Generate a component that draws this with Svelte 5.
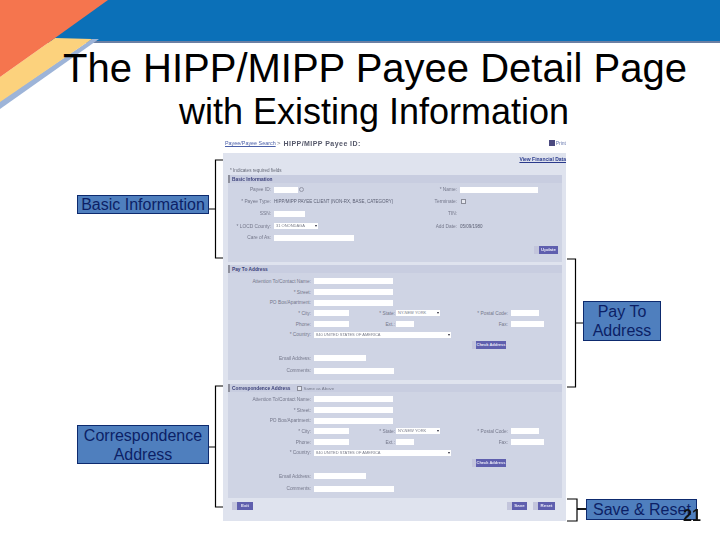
<script>
  const basicRows = [
    { label: "Payee ID:", right: "* Name:" },
    { label: "* Payee Type:", right: "Terminate:" },
    { label: "SSN:", right: "TIN:" },
    { label: "* LOCD County:", right: "Add Date:" },
    { label: "Care of As:", right: "" }
  ];
</script>

{#snippet address(title, same)}
  <section class="block">
    <h3>
      {title}
      {#if same}<span class="same"><i class="check"></i>Same as Above</span>{/if}
    </h3>
    <div class="addr-grid" class:shift={!same}>
      <span class="lab">Attention To/Contact Name:</span>
      <span class="input w79 span5"></span>

      <span class="lab">* Street:</span>
      <span class="input w79 span5"></span>

      <span class="lab">PO Box/Apartment:</span>
      <span class="input w79 span5"></span>

      <span class="lab">* City:</span>
      <span class="input w35"></span>
      <span class="lab mid">* State:</span>
      <span class="select w44"><b>NY-NEW YORK</b></span>
      <span class="lab end">* Postal Code:</span>
      <span class="input w28"></span>

      <span class="lab">Phone:</span>
      <span class="input w35"></span>
      <span class="lab mid">Ext.:</span>
      <span class="input w18"></span>
      <span class="lab end">Fax:</span>
      <span class="input w33"></span>

      <span class="lab">* Country:</span>
      <span class="select w137 span5"><b>840 UNITED STATES OF AMERICA</b></span>

      <span class="check-addr"><button class="btn w34">Check Address</button></span>

      <span class="lab">Email Address:</span>
      <span class="input w52 span5"></span>

      <span class="lab">Comments:</span>
      <span class="input w80 span5"></span>
    </div>
  </section>
{/snippet}

<div class="slide">
  <svg class="decor" width="720" height="110" viewBox="0 0 720 110">
    <rect width="720" height="41" fill="#0b70b8" />
    <rect y="41" width="720" height="2" fill="#6b7fa3" />
    <polygon points="99,39 92,39 0,101 0,109" fill="#9db4d8" />
    <polygon points="92,39 55,38 0,77 0,102" fill="#fcd27d" />
    <polygon points="0,0 108,0 55,38 0,77" fill="#f5754e" />
  </svg>

  <header class="titles">
    <h1>The HIPP/MIPP Payee Detail Page</h1>
    <h2>with Existing Information</h2>
  </header>

  <div class="shot">
    <div class="crumbs">
      <a href="#top">Payee/Payee Search</a>
      <span class="gt">&gt;</span>
      <strong>HIPP/MIPP Payee ID:</strong>
      <span class="print"><i></i>Print</span>
    </div>

    <div class="panel">
      <div class="fin"><a href="#top">View Financial Data</a></div>
      <div class="req">* Indicates required fields</div>

      <section class="block first">
        <h3>Basic Information</h3>
        <div class="basic-grid">
          <span class="lab">{basicRows[0].label}</span>
          <span class="cell"><span class="input w24"></span><i class="search"></i></span>
          <span class="lab">{basicRows[0].right}</span>
          <span class="input w78"></span>

          <span class="lab">{basicRows[1].label}</span>
          <span class="val">HIPP/MIPP PAYEE CLIENT (NON-RX, BASE, CATEGORY)</span>
          <span class="lab">{basicRows[1].right}</span>
          <span class="cell"><i class="check"></i></span>

          <span class="lab">{basicRows[2].label}</span>
          <span class="input w31"></span>
          <span class="lab">{basicRows[2].right}</span>
          <span></span>

          <span class="lab">{basicRows[3].label}</span>
          <span class="select w44"><b>31 ONONDAGA</b></span>
          <span class="lab">{basicRows[3].right}</span>
          <span class="val">05/09/1980</span>

          <span class="lab">{basicRows[4].label}</span>
          <span class="input w80"></span>
          <span></span>
          <span></span>
        </div>
        <div class="update-row"><button class="btn w24b">Update</button></div>
      </section>

      {@render address("Pay To Address", false)}
      {@render address("Correspondence Address", true)}

      <div class="footer">
        <button class="btn w21">Exit</button>
        <span class="grow"></span>
        <button class="btn w20">Save</button>
        <button class="btn w22">Reset</button>
      </div>
    </div>
  </div>

  <svg class="brackets" width="720" height="540" viewBox="0 0 720 540" fill="none" stroke="#000" stroke-width="1.2">
    <path d="M223 160H215.5V258H223M215.5 209H209" />
    <path d="M567 259H575.5V387H567M575.5 323H583" />
    <path d="M223 386H215.5V507H223M215.5 447H209" />
    <path d="M567 499H577V521H567" />
    <path d="M577 509H586" stroke-width="1.8" />
  </svg>

  <div class="note basic">Basic Information</div>
  <div class="note payto">Pay To Address</div>
  <div class="note corr">Correspondence Address</div>
  <div class="note save">Save &amp; Reset</div>
  <div class="page">21</div>
</div>

<style>
  :global(body) {
    margin: 0;
    background: #fff;
  }

  .slide {
    position: relative;
    width: 720px;
    height: 540px;
    overflow: hidden;
    background: #fff;
    font-family: "Liberation Sans", Arial, sans-serif;
    color: #000;
  }

  .decor,
  .brackets {
    position: absolute;
    left: 0;
    top: 0;
  }

  .brackets {
    pointer-events: none;
  }

  .titles {
    position: relative;
    padding-top: 46px;
    text-align: center;
  }

  h1,
  h2 {
    margin: 0;
    font-weight: 400;
    white-space: nowrap;
  }

  h1 {
    padding-left: 30px;
    font-size: 40px;
    line-height: 44px;
  }

  h2 {
    padding-left: 28px;
    font-size: 36px;
    line-height: 44px;
  }

  /* pasted screenshot of the web app */
  .shot {
    position: absolute;
    left: 223px;
    top: 133px;
    width: 343px;
    filter: blur(0.45px);
    font-size: 5px;
    color: #666a78;
  }

  .crumbs {
    display: flex;
    align-items: center;
    gap: 2px;
    height: 20px;
    padding-left: 2px;
  }

  .crumbs a {
    color: #4a5fa8;
    text-decoration: underline;
    font-size: 5.4px;
    width: 50px;
    white-space: nowrap;
  }

  .crumbs .gt {
    font-size: 6px;
  }

  .crumbs strong {
    margin-left: 1px;
    font-size: 7px;
    letter-spacing: 0.45px;
    color: #55586a;
    white-space: nowrap;
  }

  .print {
    margin-left: auto;
    display: flex;
    align-items: center;
    gap: 1px;
    color: #6a7ab0;
    font-size: 5px;
  }

  .print i {
    display: block;
    width: 6px;
    height: 6px;
    background: #4b4a80;
  }

  .panel {
    height: 368px;
    background: #dfe3ee;
    display: flex;
    flex-direction: column;
    padding: 0 5px;
    box-sizing: border-box;
  }

  .fin {
    height: 12px;
    line-height: 12px;
    text-align: right;
    font-weight: 700;
    margin-right: -5px;
  }

  .fin a {
    color: #2a3a8c;
    text-decoration: underline;
    font-size: 5px;
  }

  .req {
    height: 10px;
    line-height: 11px;
    padding-left: 2px;
    font-size: 4.6px;
  }

  .block {
    background: #cfd4e4;
    margin-top: 3px;
    width: 334px;
  }

  .block.first {
    margin-top: 0;
    height: 87px;
  }

  .block:not(.first) {
    height: 115px;
  }

  .block + .block + .block {
    height: 114px;
    margin-top: 4px;
  }

  h3 {
    margin: 0;
    display: flex;
    align-items: center;
    gap: 6px;
    height: 8px;
    padding-left: 2px;
    border-left: 2px solid #8d8f9c;
    background: #c8cde0;
    color: #3a3f78;
    font-size: 4.8px;
    font-weight: 700;
    white-space: nowrap;
  }

  .same {
    display: inline-flex;
    align-items: center;
    gap: 1px;
    font-weight: 400;
    color: #777b8c;
    font-size: 4.4px;
  }

  .basic-grid {
    display: grid;
    grid-template-columns: 46px 146px 40px 1fr;
    grid-template-rows: 11px 12px 13px 12px 11px;
    align-items: center;
    margin-top: 1px;
  }

  .addr-grid {
    display: grid;
    grid-template-columns: 86px 36px 46px 74px 41px 1fr;
    grid-template-rows: repeat(7, 10.7px) 14.8px 10.7px;
    align-items: center;
    margin-top: 2px;
  }

  .addr-grid.shift {
    margin-top: 3px;
  }

  .lab {
    text-align: right;
    padding-right: 3px;
    white-space: nowrap;
    font-size: 4.8px;
    color: #74778a;
  }

  .lab.mid {
    padding-right: 1px;
  }

  .val {
    white-space: nowrap;
    color: #5a5e72;
    font-size: 4.5px;
  }

  .cell {
    display: flex;
    align-items: center;
    gap: 1px;
  }

  .input,
  .select {
    display: block;
    height: 6px;
    background: #fff;
  }

  .select {
    position: relative;
    overflow: hidden;
    line-height: 6px;
    font-size: 4px;
    color: #777a88;
  }

  .select b {
    font-weight: 400;
    padding-left: 2px;
    white-space: nowrap;
  }

  .select::after {
    content: "";
    position: absolute;
    right: 1px;
    top: 2px;
    border: 1.5px solid transparent;
    border-top: 2px solid #223;
    border-bottom: 0;
  }

  .span5 {
    grid-column: span 5;
  }

  .w18 { width: 18px; }
  .w24 { width: 24px; }
  .w28 { width: 28px; }
  .w31 { width: 31px; }
  .w33 { width: 33px; }
  .w35 { width: 35px; }
  .w44 { width: 44px; }
  .w52 { width: 52px; }
  .w78 { width: 78px; }
  .w79 { width: 79px; }
  .w80 { width: 80px; }
  .w137 { width: 137px; }

  .check {
    display: inline-block;
    width: 3px;
    height: 3px;
    margin-left: 1px;
    border: 0.6px solid #8a8c98;
    background: #e6e8f0;
  }

  .search {
    width: 3px;
    height: 3px;
    border: 0.6px solid #9598a8;
    border-radius: 50%;
  }

  .check-addr {
    grid-column: 5 / span 2;
    padding-left: 2px;
    line-height: 0;
  }

  .btn {
    box-sizing: border-box;
    padding: 0;
    height: 8px;
    border: 0;
    border-left: 5px solid #c3c5dc;
    background: #5f5fae;
    color: #e8e8f6;
    font-family: inherit;
    font-size: 4.4px;
    font-weight: 700;
    line-height: 8px;
    text-align: center;
    white-space: nowrap;
    overflow: hidden;
  }

  .w20 { width: 20px; }
  .w21 { width: 21px; }
  .w22 { width: 22px; }
  .w24b { width: 24px; }
  .w34 { width: 34px; font-size: 4px; border-left-width: 4px; }

  .update-row {
    display: flex;
    justify-content: flex-end;
    margin-top: 3px;
    padding-right: 4px;
  }

  .footer {
    display: flex;
    gap: 6px;
    align-items: center;
    height: 14px;
    margin-top: 1px;
    width: 334px;
    padding: 0 7px 0 4px;
    box-sizing: border-box;
  }

  .footer .grow {
    flex: 1;
  }

  .note {
    position: absolute;
    box-sizing: border-box;
    display: flex;
    align-items: center;
    justify-content: center;
    text-align: center;
    background: #4f7fbe;
    border: 1px solid #0d2a6e;
    color: #0c1f66;
    font-size: 16px;
    line-height: 19px;
  }

  .basic {
    left: 77px;
    top: 195px;
    width: 132px;
    height: 19px;
  }

  .payto {
    left: 583px;
    top: 301px;
    width: 78px;
    height: 40px;
    padding: 0 6px;
  }

  .corr {
    left: 77px;
    top: 425px;
    width: 132px;
    height: 39px;
  }

  .save {
    left: 586px;
    top: 499px;
    width: 111px;
    height: 21px;
    justify-content: flex-start;
    padding-left: 6px;
  }

  .page {
    position: absolute;
    left: 683px;
    top: 507px;
    font-size: 16px;
    line-height: 18px;
    font-weight: 700;
    color: #111;
  }
</style>
